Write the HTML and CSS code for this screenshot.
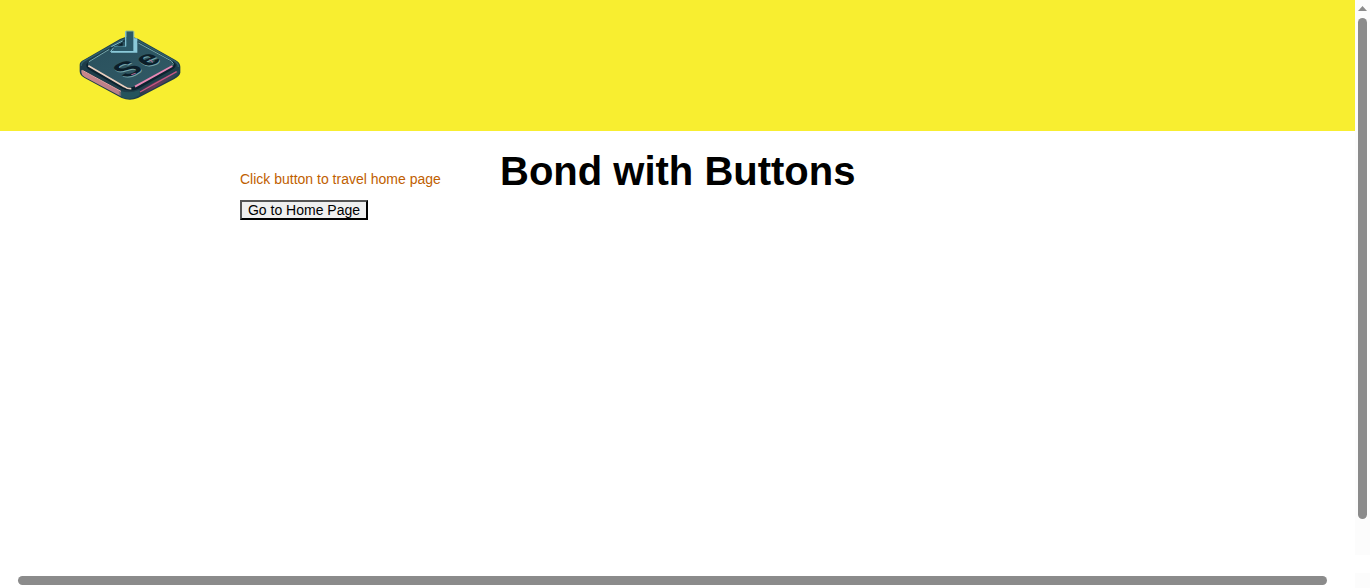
FILE: index.html
```html
<!DOCTYPE html>
<html lang="en">
<head>
<meta charset="utf-8">
<title>Bond with Buttons</title>
<link rel="stylesheet" href="styles.css">
</head>
<body>
<div class="screen">
  <div class="page">
    <header class="header">
      <svg class="logo" viewBox="0 0 360 270" role="img" aria-label="Se">
        <defs>
          <linearGradient id="side" x1="0" x2="1"><stop offset="0" stop-color="#c9868b"/><stop offset=".38" stop-color="#b87e88"/><stop offset=".42" stop-color="#285760"/><stop offset=".6" stop-color="#203c4b"/><stop offset=".75" stop-color="#6d3858"/><stop offset="1" stop-color="#204855"/></linearGradient>
          <linearGradient id="top" x1="0" x2="1" y1="0" y2="1"><stop offset="0" stop-color="#29505d"/><stop offset="1" stop-color="#315a65"/></linearGradient>
        </defs>
        <path d="M29 134Q29 125 42 119L150 57Q178 44 205 57L315 119Q331 127 331 140V158Q329 168 313 177L204 234Q180 245 155 234L44 174Q29 166 29 154Z" fill="#1e3d49"/>
        <path d="M34 150L155 215Q178 222 203 213L326 150V157Q324 165 311 173L204 230Q180 241 155 230L44 171Q34 165 34 157Z" fill="url(#side)"/>
        <path d="M154 213Q178 222 209 209V226Q180 243 154 231Z" fill="#24535c"/>
        <path d="M34 138Q32 128 46 121L152 62Q178 48 204 62L312 122Q326 130 325 141" fill="none" stroke="#31606b" stroke-width="4"/>
        <path d="M51 130L149 69Q178 52 206 69L311 126Q324 136 311 146L205 206Q180 218 154 205L55 148Q45 139 51 130Z" fill="#0c222e"/>
        <path d="M55 127L151 69Q179 55 205 69L305 126Q310 132 304 138L197 197Q181 206 163 199L56 139Q51 132 55 127Z" fill="url(#top)"/>
        <path d="M57 125L118 88M205 69L304 123Q313 130 308 137" fill="none" stroke="#77a9ac" stroke-width="3"/>
        <path d="M55 137L163 200Q173 207 184 206" fill="none" stroke="#e9cfbf" stroke-width="5"/>
        <path d="M195 200L307 138" fill="none" stroke="#e889b5" stroke-width="6"/>
        <path d="M210 216L320 155" fill="none" stroke="#c95782" stroke-width="4"/>
        <path d="M37 151L153 214" fill="none" stroke="#e5a1a0" stroke-width="3"/>
        <path d="M122 92L158 67V80L135 83Z" fill="#0c202a"/>
        <path d="M124 80L158 63M121 96L131 83" fill="none" stroke="#80bdc8" stroke-width="3"/>
        <path d="M165 34H169V80H165ZM190 34H193V55H202V98H123V94L131 92H188Z" fill="#8bcad9"/>
        <path d="M132 80H169V34H190V93H131Z" fill="#2b5967"/>
        <path d="M132 79H168V33H190" fill="none" stroke="#67aabc" stroke-width="2"/>
        <g class="logo-letters">
          <text transform="matrix(1 -.45 .75 .52 197 166)" fill="#75a4a9">S</text>
          <text transform="matrix(1 -.45 .75 .52 195 163)" fill="#0b1e29">S</text>
          <text transform="matrix(1 -.45 .75 .52 256 135)" fill="#75a4a9">e</text>
          <text transform="matrix(1 -.45 .75 .52 254 132)" fill="#0b1e29">e</text>
        </g>
        <path d="M184 164L197 160M239 119L249 127" stroke="#c0709a" stroke-width="3"/>
      </svg>
    </header>
    <main class="content">
      <section class="travel">
        <label class="hint" for="home">Click button to travel home page</label>
        <button class="home-button" id="home" type="button">Go to Home Page</button>
      </section>
      <h1 class="title">Bond with Buttons</h1>
    </main>
  </div>
  <aside class="vertical-scroll">
    <div class="track"><i class="arrow"></i><i class="vertical-thumb"></i></div>
    <div class="corner"></div>
  </aside>
  <div class="horizontal-scroll"><div class="horizontal-thumb"></div></div>
</div>
</body>
</html>
```
FILE: styles.css
```css
* { box-sizing: border-box; }
body { margin: 0; overflow: hidden; background: #fff; font-family: "Liberation Sans", Arial, sans-serif; }
.screen { height: 588px; display: grid; grid-template: 573px 15px / 1355px 15px; }
.header { height: 131px; padding: 20px 70px; background: #f8ee30; }
.logo { display: block; width: 120px; height: 90px; }
.logo-letters { font: bold 90px "Liberation Sans", Arial, sans-serif; text-anchor: middle; }
.content { display: flex; padding: 17px 0 0 240px; }
.travel { width: 260px; padding-top: 23px; display: flex; flex-direction: column; align-items: flex-start; }
.hint { font-size: 14px; line-height: 16px; color: #bf6000; white-space: nowrap; }
.home-button { width: 128px; height: 20px; margin: 13px 0 0; padding: 0; border: 2px outset #000; border-radius: 0; background: #efefef; color: #000; font: 14px/16px "Liberation Sans", Arial, sans-serif; white-space: nowrap; }
.title { margin: 0; font-size: 40px; line-height: 46px; color: #000; }
.vertical-scroll { grid-column: 2; grid-row: 1 / 3; display: flex; flex-direction: column; justify-content: space-between; }
.track { height: 555px; padding-top: 6px; background: #fcfcfc; display: flex; flex-direction: column; align-items: center; }
.arrow { width: 9px; height: 5px; background: #8b8b8b; clip-path: polygon(50% 0, 100% 100%, 0 100%); }
.vertical-thumb { width: 9px; height: 501px; margin-top: 7px; border-radius: 5px; background: #8b8b8b; }
.corner { height: 15px; background: #fcfcfc; }
.horizontal-scroll { grid-column: 1; grid-row: 2; padding: 3px 0 0 18px; }
.horizontal-thumb { width: 1309px; height: 9px; border-radius: 5px; background: #8b8b8b; }
```
